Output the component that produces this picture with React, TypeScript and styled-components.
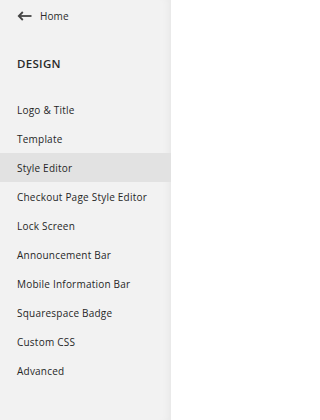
import React from "react";
import styled, { createGlobalStyle } from "styled-components";

const GlobalStyle = createGlobalStyle`
  html, body {
    margin: 0;
    padding: 0;
    background: #fff;
  }
  body {
    font-family: "Open Sans", "Liberation Sans", sans-serif;
    -webkit-font-smoothing: antialiased;
  }
`;

const Page = styled.div`
  display: flex;
  width: 200px;
  height: 420px;
  overflow: hidden;
`;

const Sidebar = styled.nav`
  width: 171px;
  height: 100%;
  flex-shrink: 0;
  background: #f2f2f2;
  box-shadow: inset -8px 0 8px -6px rgba(0, 0, 0, 0.05);
  display: flex;
  flex-direction: column;
`;

const Content = styled.main`
  flex: 1;
  background: #fff;
`;

const BackLink = styled.a`
  display: flex;
  align-items: center;
  gap: 8px;
  height: 31px;
  padding: 0 17px;
  color: #2b2b2b;
  font-size: 10px;
  letter-spacing: 0.1px;
  text-decoration: none;
  cursor: pointer;
`;

const SectionTitle = styled.h2`
  margin: 0;
  padding: 25px 17px 0;
  height: 44px;
  box-sizing: border-box;
  font-size: 11.5px;
  font-weight: 600;
  letter-spacing: 0.3px;
  color: #2a2a2a;
`;

const MenuList = styled.ul`
  list-style: none;
  margin: 20px 0 0;
  padding: 0;
`;

const MenuItem = styled.li<{ $active?: boolean }>`
  display: flex;
  align-items: center;
  height: 29px;
  padding: 0 17px;
  font-size: 10px;
  letter-spacing: 0.22px;
  color: #262626;
  background: ${(p) => (p.$active ? "#e2e2e2" : "transparent")};
  cursor: pointer;
`;

const items = [
  "Logo & Title",
  "Template",
  "Style Editor",
  "Checkout Page Style Editor",
  "Lock Screen",
  "Announcement Bar",
  "Mobile Information Bar",
  "Squarespace Badge",
  "Custom CSS",
  "Advanced",
];

const ArrowLeft = () => (
  <svg width="15" height="10" viewBox="0 0 15 10" fill="none">
    <path d="M14.5 5H2.5" stroke="#444" strokeWidth="1.8" />
    <path d="M5.8 1L1.8 5l4 4" stroke="#444" strokeWidth="1.8" />
  </svg>
);

export default function App() {
  return (
    <>
      <GlobalStyle />
      <Page>
        <Sidebar>
          <BackLink>
            <ArrowLeft />
            Home
          </BackLink>
          <SectionTitle>DESIGN</SectionTitle>
          <MenuList>
            {items.map((item) => (
              <MenuItem key={item} $active={item === "Style Editor"}>
                {item}
              </MenuItem>
            ))}
          </MenuList>
        </Sidebar>
        <Content />
      </Page>
    </>
  );
}
